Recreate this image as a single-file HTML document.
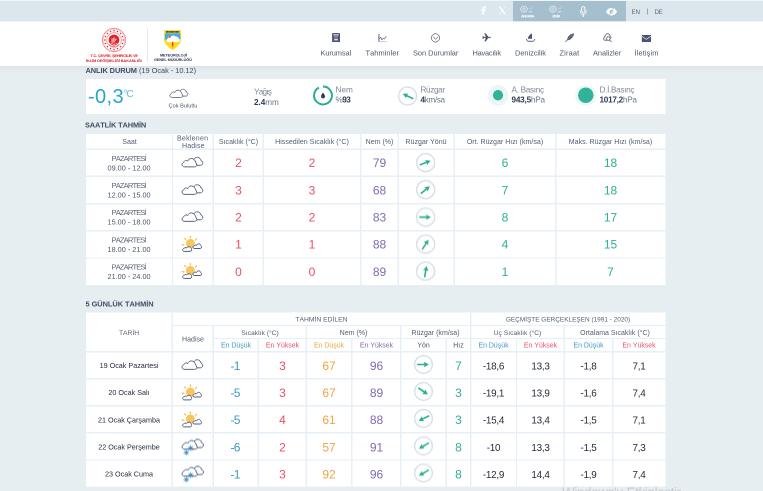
<!DOCTYPE html>
<html lang="tr"><head><meta charset="utf-8"><title>MGM</title>
<style>
html,body{margin:0;padding:0}
body{width:763px;height:491px;overflow:hidden;position:relative;background:#e7eef2;font-family:"Liberation Sans",sans-serif;color:#4c566c;font-kerning:none}
.ab{position:absolute}
.t{text-align:center;white-space:nowrap;line-height:1;will-change:transform}
.box{position:absolute;background:#fff}
.ln{position:absolute;background:#e7f0f7}
</style></head><body>
<div style="position:absolute;left:0;top:0;width:1526px;height:982px;transform:scale(.5);transform-origin:0 0">

<div class="ab" style="left:0;top:0;width:1526px;height:42.8px;background:#dbe6ed"></div>
<div class="ab" style="left:0;top:0;width:1526px;height:2px;background:#f1f5f8"></div>
<div class="ab" style="left:1026px;top:2px;width:226px;height:40.8px;background:#a6bfcf"></div>
<div class="ab" style="left:0;top:42.8px;width:1526px;height:89.2px;background:#fff"></div>
<div class="ab" style="left:0;top:132px;width:1526px;height:12px;background:linear-gradient(#dbe4ea,#e7eef2)"></div>
<div class="ab t" style="left:1263.06px;top:18px;font-size:12.4px;color:#5d677b;text-align:left;letter-spacing:-0.14px;">EN</div>
<div class="ab" style="left:1294px;top:17.2px;width:1.6px;height:12px;background:#9aa6b4"></div>
<div class="ab t" style="left:1308.86px;top:18px;font-size:12.4px;color:#5d677b;text-align:left;letter-spacing:-0.94px;">DE</div>
<div class="ab t" style="left:180.52px;top:108px;font-size:7.9px;color:#e0202b;text-align:left;letter-spacing:-0.46px;font-weight:bold;">T.C. ÇEVRE, ŞEHİRCİLİK VE</div>
<div class="ab t" style="left:172.32px;top:118px;font-size:7.9px;color:#e0202b;text-align:left;letter-spacing:-0.23px;font-weight:bold;">İKLİM DEĞİŞİKLİĞİ BAKANLIĞI</div>
<div class="ab t" style="left:319.94px;top:107px;font-size:7.6px;color:#2b3350;text-align:left;letter-spacing:-0.22px;font-weight:bold;">METEOROLOJİ</div>
<div class="ab t" style="left:307.94px;top:116px;font-size:7.6px;color:#2b3350;text-align:left;letter-spacing:-0.17px;font-weight:bold;">GENEL MÜDÜRLÜĞÜ</div>
<div class="ab t" style="left:641.32px;top:99px;font-size:14.8px;color:#4c566c;text-align:left;letter-spacing:-0.16px;">Kurumsal</div>
<div class="ab t" style="left:730.92px;top:99px;font-size:14.8px;color:#4c566c;text-align:left;letter-spacing:0.15px;">Tahminler</div>
<div class="ab t" style="left:825.52px;top:99px;font-size:14.8px;color:#4c566c;text-align:left;letter-spacing:-0.05px;">Son Durumlar</div>
<div class="ab t" style="left:945.12px;top:99px;font-size:14.8px;color:#4c566c;text-align:left;letter-spacing:-0.46px;">Havacılık</div>
<div class="ab t" style="left:1029.72px;top:99px;font-size:14.8px;color:#4c566c;text-align:left;letter-spacing:-0.06px;">Denizcilik</div>
<div class="ab t" style="left:1118.92px;top:99px;font-size:14.8px;color:#4c566c;text-align:left;letter-spacing:0.31px;">Ziraat</div>
<div class="ab t" style="left:1185.52px;top:99px;font-size:14.8px;color:#4c566c;text-align:left;letter-spacing:-0.05px;">Analizler</div>
<div class="ab t" style="left:1269.12px;top:99px;font-size:14.8px;color:#4c566c;text-align:left;letter-spacing:0.25px;">İletişim</div>
<div class="box" style="left:172px;top:157.6px;width:1158.6px;height:70.6px"></div>
<div class="ab t" style="left:170.52px;top:134px;font-size:14.8px;color:#3f4b63;text-align:left;letter-spacing:-0.16px;font-weight:bold;">ANLIK DURUM</div>
<div class="ab t" style="left:277.52px;top:134px;font-size:14.8px;color:#3f4b63;text-align:left;letter-spacing:-0.06px;">(19 Ocak - 10.12)</div>
<div class="ab t" style="left:176.4px;top:172px;font-size:40px;color:#27a6c9;text-align:left;letter-spacing:0.76px;">-0,3</div>
<div class="ab t" style="left:247.18px;top:177px;font-size:20.4px;color:#5fbfd8;text-align:left;letter-spacing:-2.44px;">°C</div>
<svg class="ab" style="left:337.6px;top:177.2px;width:40.32px;height:21.84px" viewBox="0 0 24 13"><g fill="#fff" stroke="#525c7a" stroke-width="0.98" stroke-linejoin="round" stroke-linecap="round"><path d="M13.4 2.6 C14.2 1.2 15.6 0.7 17 0.8 C19.2 1 20.3 2.6 20.6 4.2 C22 4.6 22.6 5.8 22.4 7 C22.2 8.3 21.2 9.1 20 9.1 L16.3 9.1 Z"/><path d="M3.6 10.7 C2 10.7 1.1 9.6 1.1 8.3 C1.1 7 2 6.2 3 5.9 C3.2 4.7 4.3 3.9 5.6 4.1 C6.2 4.2 6.6 4.5 6.9 4.8 C7.4 3 9 1.9 10.9 2 C13.3 2.2 14.6 4 15.2 6 L16.4 8.7 C16.2 10 15.3 10.7 14.2 10.7 Z"/></g></svg>
<div class="ab t" style="left:337.12px;top:206px;font-size:11.2px;color:#4c566c;text-align:left;letter-spacing:0.05px;">Çok Bulutlu</div>
<div class="ab t" style="left:508.22px;top:175px;font-size:16.4px;color:#7d8799;text-align:left;letter-spacing:-1.54px;">Yağış</div>
<div class="ab t" style="left:508.22px;top:196px;font-size:16.4px;text-align:left;letter-spacing:-0.14px;"><span style="color:#2f3a55;font-weight:bold;">2.4</span><span style="color:#6a7488;">mm</span></div>
<div class="ab t" style="left:671.42px;top:171px;font-size:16.4px;color:#7d8799;text-align:left;letter-spacing:0.07px;">Nem</div>
<div class="ab t" style="left:671.42px;top:191px;font-size:16.4px;text-align:left;letter-spacing:-1.13px;"><span style="color:#6a7488;">%</span><span style="color:#2f3a55;font-weight:bold;">93</span></div>
<div class="ab t" style="left:841.02px;top:171px;font-size:16.4px;color:#7d8799;text-align:left;letter-spacing:-0.74px;">Rüzgar</div>
<div class="ab t" style="left:841.02px;top:191px;font-size:16.4px;text-align:left;letter-spacing:-0.74px;"><span style="color:#2f3a55;font-weight:bold;">4</span><span style="color:#6a7488;">km/sa</span></div>
<div class="ab t" style="left:1023.42px;top:171px;font-size:16.4px;color:#7d8799;text-align:left;letter-spacing:-0.63px;">A. Basınç</div>
<div class="ab t" style="left:1023.42px;top:191px;font-size:16.4px;text-align:left;letter-spacing:-0.44px;"><span style="color:#2f3a55;font-weight:bold;">943,5</span><span style="color:#6a7488;">hPa</span></div>
<div class="ab t" style="left:1199.02px;top:171px;font-size:16.4px;color:#7d8799;text-align:left;letter-spacing:-0.63px;">D.İ.Basınç</div>
<div class="ab t" style="left:1199.02px;top:191px;font-size:16.4px;text-align:left;letter-spacing:-0.55px;"><span style="color:#2f3a55;font-weight:bold;">1017,2</span><span style="color:#6a7488;">hPa</span></div>
<svg class="ab" style="left:624px;top:169.2px;width:44px;height:44px" viewBox="0 0 22 22"><path d="M11.00 2.05A8.95 8.95 0 1 1 6.94 3.03" fill="none" stroke="#22ad92" stroke-width="1.9"/><path d="M11 7.9C12.2 9.8 13 10.9 13 12C13 13.2 12.1 14 11 14C9.9 14 9 13.2 9 12C9 10.9 9.8 9.8 11 7.9Z" fill="#2b3350"/><path d="M10.1 11.8C10.1 12.5 10.5 13 11 13.1" stroke="#9aa2b5" stroke-width="0.5" fill="none"/></svg>
<svg class="ab" style="left:793.6px;top:170.6px;width:42.4px;height:42.4px" viewBox="0 0 21.2 21.2"><circle cx="10.6" cy="10.6" r="9.049999999999999" fill="#fff" stroke="#d8e0e6" stroke-width="1.45"/><g transform="rotate(205 10.6 10.6)"><path d="M4.3 9.799999999999999L11.5 9.799999999999999L11.1 7.8999999999999995L15.899999999999999 10.6L11.1 13.3L11.5 11.4L4.3 11.4Z" fill="#2daf97"/></g></svg>
<div class="ab" style="left:975px;top:169.8px;width:42px;height:42px;border-radius:50%;background:#ecf7f5"></div><div class="ab" style="left:985.6px;top:180.4px;width:20.8px;height:20.8px;border-radius:50%;background:#33b29a"></div>
<div class="ab" style="left:1150.2px;top:169.8px;width:42px;height:42px;border-radius:50%;background:#ecf7f5"></div><div class="ab" style="left:1155.8px;top:175.4px;width:30.8px;height:30.8px;border-radius:50%;background:#33b29a"></div>
<div class="ab t" style="left:170.32px;top:243px;font-size:14.8px;color:#3f4b63;text-align:left;letter-spacing:-0.25px;font-weight:bold;">SAATLİK TAHMİN</div>
<div class="box" style="left:172px;top:267.8px;width:1158.6px;height:301.8px"></div>
<div class="ln" style="left:172px;top:297px;width:1158.6px;height:2.8px"></div>
<div class="ln" style="left:172px;top:351.4px;width:1158.6px;height:2.8px"></div>
<div class="ln" style="left:172px;top:405.8px;width:1158.6px;height:2.8px"></div>
<div class="ln" style="left:172px;top:460.2px;width:1158.6px;height:2.8px"></div>
<div class="ln" style="left:172px;top:514.6px;width:1158.6px;height:2.8px"></div>
<div class="ln" style="left:343.6px;top:267.8px;width:2.8px;height:301.8px"></div>
<div class="ln" style="left:425px;top:267.8px;width:2.8px;height:301.8px"></div>
<div class="ln" style="left:525.2px;top:267.8px;width:2.8px;height:301.8px"></div>
<div class="ln" style="left:719.8px;top:267.8px;width:2.8px;height:301.8px"></div>
<div class="ln" style="left:795.2px;top:267.8px;width:2.8px;height:301.8px"></div>
<div class="ln" style="left:906.8px;top:267.8px;width:2.8px;height:301.8px"></div>
<div class="ln" style="left:1110.2px;top:267.8px;width:2.8px;height:301.8px"></div>
<div class="ab t" style="left:58.5px;top:276px;width:400px;font-size:14.1px;color:#545e74;">Saat</div>
<div class="ab t" style="left:276.5px;top:276px;width:400px;font-size:14.1px;color:#545e74;">Sıcaklık (°C)</div>
<div class="ab t" style="left:423.9px;top:276px;width:400px;font-size:14.1px;color:#545e74;">Hissedilen Sıcaklık (°C)</div>
<div class="ab t" style="left:558.9px;top:276px;width:400px;font-size:14.1px;color:#545e74;">Nem (%)</div>
<div class="ab t" style="left:652.4px;top:276px;width:400px;font-size:14.1px;color:#545e74;">Rüzgar Yönü</div>
<div class="ab t" style="left:809.9px;top:276px;width:400px;font-size:14.1px;color:#545e74;">Ort. Rüzgar Hızı (km/sa)</div>
<div class="ab t" style="left:1021.1px;top:276px;width:400px;font-size:14.1px;color:#545e74;">Maks. Rüzgar Hızı (km/sa)</div>
<div class="ab t" style="left:354.36px;top:269px;font-size:14.1px;color:#545e74;text-align:left;letter-spacing:0.47px;">Beklenen</div>
<div class="ab t" style="left:363.56px;top:284px;font-size:14.1px;color:#545e74;text-align:left;letter-spacing:0.24px;">Hadise</div>
<div class="ab t" style="left:223.1px;top:309px;font-size:15px;color:#5b6579;text-align:left;letter-spacing:-1.62px;">PAZARTESİ</div>
<div class="ab t" style="left:214.52px;top:329px;font-size:14.6px;color:#4c566c;text-align:left;letter-spacing:0.01px;">09.00 - 12.00</div>
<svg class="ab" style="left:362px;top:313.2px;width:46.56px;height:25.22px" viewBox="0 0 24 13"><g fill="#fff" stroke="#525c7a" stroke-width="0.98" stroke-linejoin="round" stroke-linecap="round"><path d="M13.4 2.6 C14.2 1.2 15.6 0.7 17 0.8 C19.2 1 20.3 2.6 20.6 4.2 C22 4.6 22.6 5.8 22.4 7 C22.2 8.3 21.2 9.1 20 9.1 L16.3 9.1 Z"/><path d="M3.6 10.7 C2 10.7 1.1 9.6 1.1 8.3 C1.1 7 2 6.2 3 5.9 C3.2 4.7 4.3 3.9 5.6 4.1 C6.2 4.2 6.6 4.5 6.9 4.8 C7.4 3 9 1.9 10.9 2 C13.3 2.2 14.6 4 15.2 6 L16.4 8.7 C16.2 10 15.3 10.7 14.2 10.7 Z"/></g></svg>
<div class="ab t" style="left:276.5px;top:314px;width:400px;font-size:24px;color:#e8506a;">2</div>
<div class="ab t" style="left:423.9px;top:314px;width:400px;font-size:24px;color:#e8506a;">2</div>
<div class="ab t" style="left:558.9px;top:314px;width:400px;font-size:24px;color:#7e6bb0;">79</div>
<svg class="ab" style="left:830.3px;top:303.7px;width:42.6px;height:42.6px" viewBox="0 0 21.3 21.3"><circle cx="10.65" cy="10.65" r="9.1" fill="#fff" stroke="#d8e0e6" stroke-width="1.45"/><g transform="rotate(-21 10.65 10.65)"><path d="M4.3500000000000005 9.85L11.55 9.85L11.15 7.95L15.95 10.65L11.15 13.350000000000001L11.55 11.450000000000001L4.3500000000000005 11.450000000000001Z" fill="#2daf97"/></g></svg>
<div class="ab t" style="left:809.9px;top:314px;width:400px;font-size:24px;color:#2daf97;">6</div>
<div class="ab t" style="left:1021.1px;top:314px;width:400px;font-size:24px;color:#2daf97;">18</div>
<div class="ab t" style="left:223.1px;top:363px;font-size:15px;color:#5b6579;text-align:left;letter-spacing:-1.62px;">PAZARTESİ</div>
<div class="ab t" style="left:214.52px;top:383px;font-size:14.6px;color:#4c566c;text-align:left;letter-spacing:0.01px;">12.00 - 15.00</div>
<svg class="ab" style="left:362px;top:367.6px;width:46.56px;height:25.22px" viewBox="0 0 24 13"><g fill="#fff" stroke="#525c7a" stroke-width="0.98" stroke-linejoin="round" stroke-linecap="round"><path d="M13.4 2.6 C14.2 1.2 15.6 0.7 17 0.8 C19.2 1 20.3 2.6 20.6 4.2 C22 4.6 22.6 5.8 22.4 7 C22.2 8.3 21.2 9.1 20 9.1 L16.3 9.1 Z"/><path d="M3.6 10.7 C2 10.7 1.1 9.6 1.1 8.3 C1.1 7 2 6.2 3 5.9 C3.2 4.7 4.3 3.9 5.6 4.1 C6.2 4.2 6.6 4.5 6.9 4.8 C7.4 3 9 1.9 10.9 2 C13.3 2.2 14.6 4 15.2 6 L16.4 8.7 C16.2 10 15.3 10.7 14.2 10.7 Z"/></g></svg>
<div class="ab t" style="left:276.5px;top:369px;width:400px;font-size:24px;color:#e8506a;">3</div>
<div class="ab t" style="left:423.9px;top:369px;width:400px;font-size:24px;color:#e8506a;">3</div>
<div class="ab t" style="left:558.9px;top:369px;width:400px;font-size:24px;color:#7e6bb0;">68</div>
<svg class="ab" style="left:830.3px;top:358.1px;width:42.6px;height:42.6px" viewBox="0 0 21.3 21.3"><circle cx="10.65" cy="10.65" r="9.1" fill="#fff" stroke="#d8e0e6" stroke-width="1.45"/><g transform="rotate(-40 10.65 10.65)"><path d="M4.3500000000000005 9.85L11.55 9.85L11.15 7.95L15.95 10.65L11.15 13.350000000000001L11.55 11.450000000000001L4.3500000000000005 11.450000000000001Z" fill="#2daf97"/></g></svg>
<div class="ab t" style="left:809.9px;top:369px;width:400px;font-size:24px;color:#2daf97;">7</div>
<div class="ab t" style="left:1021.1px;top:369px;width:400px;font-size:24px;color:#2daf97;">18</div>
<div class="ab t" style="left:223.1px;top:417px;font-size:15px;color:#5b6579;text-align:left;letter-spacing:-1.62px;">PAZARTESİ</div>
<div class="ab t" style="left:214.52px;top:437px;font-size:14.6px;color:#4c566c;text-align:left;letter-spacing:0.01px;">15.00 - 18.00</div>
<svg class="ab" style="left:362px;top:422px;width:46.56px;height:25.22px" viewBox="0 0 24 13"><g fill="#fff" stroke="#525c7a" stroke-width="0.98" stroke-linejoin="round" stroke-linecap="round"><path d="M13.4 2.6 C14.2 1.2 15.6 0.7 17 0.8 C19.2 1 20.3 2.6 20.6 4.2 C22 4.6 22.6 5.8 22.4 7 C22.2 8.3 21.2 9.1 20 9.1 L16.3 9.1 Z"/><path d="M3.6 10.7 C2 10.7 1.1 9.6 1.1 8.3 C1.1 7 2 6.2 3 5.9 C3.2 4.7 4.3 3.9 5.6 4.1 C6.2 4.2 6.6 4.5 6.9 4.8 C7.4 3 9 1.9 10.9 2 C13.3 2.2 14.6 4 15.2 6 L16.4 8.7 C16.2 10 15.3 10.7 14.2 10.7 Z"/></g></svg>
<div class="ab t" style="left:276.5px;top:423px;width:400px;font-size:24px;color:#e8506a;">2</div>
<div class="ab t" style="left:423.9px;top:423px;width:400px;font-size:24px;color:#e8506a;">2</div>
<div class="ab t" style="left:558.9px;top:423px;width:400px;font-size:24px;color:#7e6bb0;">83</div>
<svg class="ab" style="left:830.3px;top:412.5px;width:42.6px;height:42.6px" viewBox="0 0 21.3 21.3"><circle cx="10.65" cy="10.65" r="9.1" fill="#fff" stroke="#d8e0e6" stroke-width="1.45"/><g transform="rotate(0 10.65 10.65)"><path d="M4.3500000000000005 9.85L11.55 9.85L11.15 7.95L15.95 10.65L11.15 13.350000000000001L11.55 11.450000000000001L4.3500000000000005 11.450000000000001Z" fill="#2daf97"/></g></svg>
<div class="ab t" style="left:809.9px;top:423px;width:400px;font-size:24px;color:#2daf97;">8</div>
<div class="ab t" style="left:1021.1px;top:423px;width:400px;font-size:24px;color:#2daf97;">17</div>
<div class="ab t" style="left:223.1px;top:472px;font-size:15px;color:#5b6579;text-align:left;letter-spacing:-1.62px;">PAZARTESİ</div>
<div class="ab t" style="left:214.52px;top:492px;font-size:14.6px;color:#4c566c;text-align:left;letter-spacing:0.01px;">18.00 - 21.00</div>
<svg class="ab" style="left:362px;top:471px;width:48px;height:38px" viewBox="0 0 24 19"><g stroke="#f8c65f" stroke-width="1.35" stroke-linecap="round"><path d="M9.4 0.9V2.5"/><path d="M3.5 3.0L4.8 4.1"/><path d="M15.4 3.3L14.5 4.5"/><path d="M1.2 9.2H2.9"/></g><circle cx="9.4" cy="7.9" r="4.45" fill="#f8c65f"/><g fill="#fff" stroke="#525c7a" stroke-width="1" stroke-linejoin="round"><path d="M13.2 13.0 C12.3 13.0 11.8 12.4 11.8 11.7 C11.8 10.9 12.5 10.4 13.2 10.4 C13.5 9.8 14.1 9.5 14.8 9.6 C15.1 9.6 15.4 9.7 15.6 9.9 C16.0 8.9 16.7 8.3 17.6 8.3 C18.8 8.3 19.7 9.2 19.9 10.3 C20.3 10.6 20.6 11.1 20.55 11.7 C20.5 12.5 19.9 13.0 19.2 13.0 Z"/><path d="M3.2 15.9 C2.2 15.9 1.6 15.1 1.6 14.3 C1.6 13.4 2.4 12.8 3.2 12.8 C3.5 12.2 4.2 11.9 4.9 12.0 C5.3 12.0 5.6 12.2 5.8 12.3 C6.3 11.6 7.1 11.2 8.0 11.2 C9.3 11.2 10.2 12.1 10.4 13.2 C10.6 13.6 10.7 14.0 10.6 14.5 C10.5 15.4 9.9 15.9 9.2 15.9 Z"/></g></svg>
<div class="ab t" style="left:276.5px;top:477px;width:400px;font-size:24px;color:#e8506a;">1</div>
<div class="ab t" style="left:423.9px;top:477px;width:400px;font-size:24px;color:#e8506a;">1</div>
<div class="ab t" style="left:558.9px;top:477px;width:400px;font-size:24px;color:#7e6bb0;">88</div>
<svg class="ab" style="left:830.3px;top:466.9px;width:42.6px;height:42.6px" viewBox="0 0 21.3 21.3"><circle cx="10.65" cy="10.65" r="9.1" fill="#fff" stroke="#d8e0e6" stroke-width="1.45"/><g transform="rotate(-57 10.65 10.65)"><path d="M4.3500000000000005 9.85L11.55 9.85L11.15 7.95L15.95 10.65L11.15 13.350000000000001L11.55 11.450000000000001L4.3500000000000005 11.450000000000001Z" fill="#2daf97"/></g></svg>
<div class="ab t" style="left:809.9px;top:477px;width:400px;font-size:24px;color:#2daf97;">4</div>
<div class="ab t" style="left:1021.1px;top:477px;width:400px;font-size:24px;color:#2daf97;">15</div>
<div class="ab t" style="left:223.1px;top:526px;font-size:15px;color:#5b6579;text-align:left;letter-spacing:-1.62px;">PAZARTESİ</div>
<div class="ab t" style="left:214.52px;top:546px;font-size:14.6px;color:#4c566c;text-align:left;letter-spacing:0.01px;">21.00 - 24.00</div>
<svg class="ab" style="left:362px;top:525.4px;width:48px;height:38px" viewBox="0 0 24 19"><g stroke="#f8c65f" stroke-width="1.35" stroke-linecap="round"><path d="M9.4 0.9V2.5"/><path d="M3.5 3.0L4.8 4.1"/><path d="M15.4 3.3L14.5 4.5"/><path d="M1.2 9.2H2.9"/></g><circle cx="9.4" cy="7.9" r="4.45" fill="#f8c65f"/><g fill="#fff" stroke="#525c7a" stroke-width="1" stroke-linejoin="round"><path d="M13.2 13.0 C12.3 13.0 11.8 12.4 11.8 11.7 C11.8 10.9 12.5 10.4 13.2 10.4 C13.5 9.8 14.1 9.5 14.8 9.6 C15.1 9.6 15.4 9.7 15.6 9.9 C16.0 8.9 16.7 8.3 17.6 8.3 C18.8 8.3 19.7 9.2 19.9 10.3 C20.3 10.6 20.6 11.1 20.55 11.7 C20.5 12.5 19.9 13.0 19.2 13.0 Z"/><path d="M3.2 15.9 C2.2 15.9 1.6 15.1 1.6 14.3 C1.6 13.4 2.4 12.8 3.2 12.8 C3.5 12.2 4.2 11.9 4.9 12.0 C5.3 12.0 5.6 12.2 5.8 12.3 C6.3 11.6 7.1 11.2 8.0 11.2 C9.3 11.2 10.2 12.1 10.4 13.2 C10.6 13.6 10.7 14.0 10.6 14.5 C10.5 15.4 9.9 15.9 9.2 15.9 Z"/></g></svg>
<div class="ab t" style="left:276.5px;top:532px;width:400px;font-size:24px;color:#e8506a;">0</div>
<div class="ab t" style="left:423.9px;top:532px;width:400px;font-size:24px;color:#e8506a;">0</div>
<div class="ab t" style="left:558.9px;top:532px;width:400px;font-size:24px;color:#7e6bb0;">89</div>
<svg class="ab" style="left:830.3px;top:521.3px;width:42.6px;height:42.6px" viewBox="0 0 21.3 21.3"><circle cx="10.65" cy="10.65" r="9.1" fill="#fff" stroke="#d8e0e6" stroke-width="1.45"/><g transform="rotate(-80 10.65 10.65)"><path d="M4.3500000000000005 9.85L11.55 9.85L11.15 7.95L15.95 10.65L11.15 13.350000000000001L11.55 11.450000000000001L4.3500000000000005 11.450000000000001Z" fill="#2daf97"/></g></svg>
<div class="ab t" style="left:809.9px;top:532px;width:400px;font-size:24px;color:#2daf97;">1</div>
<div class="ab t" style="left:1021.1px;top:532px;width:400px;font-size:24px;color:#2daf97;">7</div>
<div class="ab t" style="left:170.72px;top:601px;font-size:14.8px;color:#3f4b63;text-align:left;letter-spacing:-0.08px;font-weight:bold;">5 GÜNLÜK TAHMİN</div>
<div class="box" style="left:172px;top:625.2px;width:1158.6px;height:347.6px"></div>
<div class="ln" style="left:344.8px;top:649.6px;width:985.8px;height:2.8px"></div>
<div class="ln" style="left:426.4px;top:675.6px;width:904.2px;height:2.8px"></div>
<div class="ln" style="left:172px;top:701.8px;width:1158.6px;height:2.8px"></div>
<div class="ln" style="left:172px;top:756px;width:1158.6px;height:2.8px"></div>
<div class="ln" style="left:172px;top:810.2px;width:1158.6px;height:2.8px"></div>
<div class="ln" style="left:172px;top:864.4px;width:1158.6px;height:2.8px"></div>
<div class="ln" style="left:172px;top:918.6px;width:1158.6px;height:2.8px"></div>
<div class="ln" style="left:343.4px;top:625.2px;width:2.8px;height:347.6px"></div>
<div class="ln" style="left:425px;top:651px;width:2.8px;height:321.8px"></div>
<div class="ln" style="left:611.4px;top:651px;width:2.8px;height:321.8px"></div>
<div class="ln" style="left:799.8px;top:651px;width:2.8px;height:321.8px"></div>
<div class="ln" style="left:1127.4px;top:651px;width:2.8px;height:321.8px"></div>
<div class="ln" style="left:939.8px;top:625.2px;width:2.8px;height:347.6px"></div>
<div class="ln" style="left:515.2px;top:677px;width:2.8px;height:295.8px"></div>
<div class="ln" style="left:702.4px;top:677px;width:2.8px;height:295.8px"></div>
<div class="ln" style="left:891.4px;top:677px;width:2.8px;height:295.8px"></div>
<div class="ln" style="left:1031.6px;top:677px;width:2.8px;height:295.8px"></div>
<div class="ln" style="left:1224.4px;top:677px;width:2.8px;height:295.8px"></div>
<div class="ab t" style="left:58.4px;top:659px;width:400px;font-size:13.4px;color:#545e74;">TARİH</div>
<div class="ab t" style="left:185.6px;top:671px;width:400px;font-size:14.1px;color:#545e74;">Hadise</div>
<div class="ab t" style="left:443px;top:632px;width:400px;font-size:13.5px;color:#545e74;">TAHMİN EDİLEN</div>
<div class="ab t" style="left:935.9px;top:633px;width:400px;font-size:12.9px;color:#545e74;">GEÇMİŞTE GERÇEKLEŞEN (1991 - 2020)</div>
<div class="ab t" style="left:319.6px;top:659px;width:400px;font-size:13.5px;color:#545e74;">Sıcaklık (°C)</div>
<div class="ab t" style="left:507px;top:658px;width:400px;font-size:14.1px;color:#545e74;">Nem (%)</div>
<div class="ab t" style="left:671.2px;top:658px;width:400px;font-size:14.1px;color:#545e74;">Rüzgar (km/sa)</div>
<div class="ab t" style="left:835px;top:659px;width:400px;font-size:13.5px;color:#545e74;">Uç Sıcaklık (°C)</div>
<div class="ab t" style="left:1029.7px;top:658px;width:400px;font-size:14px;color:#545e74;">Ortalama Sıcaklık (°C)</div>
<div class="ab t" style="left:271.5px;top:684px;width:400px;font-size:13.9px;color:#3c9ac6;">En Düşük</div>
<div class="ab t" style="left:364.7px;top:684px;width:400px;font-size:13.9px;color:#e8506a;">En Yüksek</div>
<div class="ab t" style="left:458.3px;top:684px;width:400px;font-size:13.9px;color:#f0a341;">En Düşük</div>
<div class="ab t" style="left:552.5px;top:684px;width:400px;font-size:13.9px;color:#7e6bb0;">En Yüksek</div>
<div class="ab t" style="left:647px;top:684px;width:400px;font-size:13.9px;color:#4c566c;">Yön</div>
<div class="ab t" style="left:717px;top:684px;width:400px;font-size:13.9px;color:#4c566c;">Hız</div>
<div class="ab t" style="left:787.1px;top:684px;width:400px;font-size:13.9px;color:#3c9ac6;">En Düşük</div>
<div class="ab t" style="left:880.9px;top:684px;width:400px;font-size:13.9px;color:#e8506a;">En Yüksek</div>
<div class="ab t" style="left:977.3px;top:684px;width:400px;font-size:13.9px;color:#3c9ac6;">En Düşük</div>
<div class="ab t" style="left:1078.2px;top:684px;width:400px;font-size:13.9px;color:#e8506a;">En Yüksek</div>
<div class="ab t" style="left:57.6px;top:724px;width:400px;font-size:14.4px;color:#262b3a;">19 Ocak Pazartesi</div>
<svg class="ab" style="left:361.8px;top:718.4px;width:46.56px;height:25.22px" viewBox="0 0 24 13"><g fill="#fff" stroke="#525c7a" stroke-width="0.98" stroke-linejoin="round" stroke-linecap="round"><path d="M13.4 2.6 C14.2 1.2 15.6 0.7 17 0.8 C19.2 1 20.3 2.6 20.6 4.2 C22 4.6 22.6 5.8 22.4 7 C22.2 8.3 21.2 9.1 20 9.1 L16.3 9.1 Z"/><path d="M3.6 10.7 C2 10.7 1.1 9.6 1.1 8.3 C1.1 7 2 6.2 3 5.9 C3.2 4.7 4.3 3.9 5.6 4.1 C6.2 4.2 6.6 4.5 6.9 4.8 C7.4 3 9 1.9 10.9 2 C13.3 2.2 14.6 4 15.2 6 L16.4 8.7 C16.2 10 15.3 10.7 14.2 10.7 Z"/></g></svg>
<div class="ab t" style="left:270.5px;top:720px;width:400px;font-size:24px;color:#3c9ac6;"><span style="margin-right:-1.6px">-</span>1</div>
<div class="ab t" style="left:364.7px;top:720px;width:400px;font-size:24px;color:#e8506a;">3</div>
<div class="ab t" style="left:458.3px;top:720px;width:400px;font-size:24px;color:#f0a341;">67</div>
<div class="ab t" style="left:552.5px;top:720px;width:400px;font-size:24px;color:#7e6bb0;">96</div>
<svg class="ab" style="left:825.6px;top:708px;width:42px;height:42px" viewBox="0 0 21.0 21.0"><circle cx="10.5" cy="10.5" r="8.95" fill="#fff" stroke="#d8e0e6" stroke-width="1.45"/><g transform="rotate(0 10.5 10.5)"><path d="M4.2 9.7L11.4 9.7L11.0 7.8L15.8 10.5L11.0 13.2L11.4 11.3L4.2 11.3Z" fill="#2daf97"/></g></svg>
<div class="ab t" style="left:717px;top:720px;width:400px;font-size:24px;color:#2daf97;">7</div>
<div class="ab t" style="left:787.1px;top:723px;width:400px;font-size:19.8px;color:#262b3a;letter-spacing:-0.56px;">-18,6</div>
<div class="ab t" style="left:880.9px;top:723px;width:400px;font-size:19.8px;color:#262b3a;letter-spacing:-0.56px;">13,3</div>
<div class="ab t" style="left:977.3px;top:723px;width:400px;font-size:19.8px;color:#262b3a;letter-spacing:-0.56px;">-1,8</div>
<div class="ab t" style="left:1078.2px;top:723px;width:400px;font-size:19.8px;color:#262b3a;letter-spacing:-0.56px;">7,1</div>
<div class="ab t" style="left:57.6px;top:778px;width:400px;font-size:14.4px;color:#262b3a;">20 Ocak Salı</div>
<svg class="ab" style="left:362px;top:768px;width:48px;height:38px" viewBox="0 0 24 19"><g stroke="#f8c65f" stroke-width="1.35" stroke-linecap="round"><path d="M9.4 0.9V2.5"/><path d="M3.5 3.0L4.8 4.1"/><path d="M15.4 3.3L14.5 4.5"/><path d="M1.2 9.2H2.9"/></g><circle cx="9.4" cy="7.9" r="4.45" fill="#f8c65f"/><g fill="#fff" stroke="#525c7a" stroke-width="1" stroke-linejoin="round"><path d="M13.2 13.0 C12.3 13.0 11.8 12.4 11.8 11.7 C11.8 10.9 12.5 10.4 13.2 10.4 C13.5 9.8 14.1 9.5 14.8 9.6 C15.1 9.6 15.4 9.7 15.6 9.9 C16.0 8.9 16.7 8.3 17.6 8.3 C18.8 8.3 19.7 9.2 19.9 10.3 C20.3 10.6 20.6 11.1 20.55 11.7 C20.5 12.5 19.9 13.0 19.2 13.0 Z"/><path d="M3.2 15.9 C2.2 15.9 1.6 15.1 1.6 14.3 C1.6 13.4 2.4 12.8 3.2 12.8 C3.5 12.2 4.2 11.9 4.9 12.0 C5.3 12.0 5.6 12.2 5.8 12.3 C6.3 11.6 7.1 11.2 8.0 11.2 C9.3 11.2 10.2 12.1 10.4 13.2 C10.6 13.6 10.7 14.0 10.6 14.5 C10.5 15.4 9.9 15.9 9.2 15.9 Z"/></g></svg>
<div class="ab t" style="left:270.5px;top:774px;width:400px;font-size:24px;color:#3c9ac6;"><span style="margin-right:-1.6px">-</span>5</div>
<div class="ab t" style="left:364.7px;top:774px;width:400px;font-size:24px;color:#e8506a;">3</div>
<div class="ab t" style="left:458.3px;top:774px;width:400px;font-size:24px;color:#f0a341;">67</div>
<div class="ab t" style="left:552.5px;top:774px;width:400px;font-size:24px;color:#7e6bb0;">89</div>
<svg class="ab" style="left:825.6px;top:762.2px;width:42px;height:42px" viewBox="0 0 21.0 21.0"><circle cx="10.5" cy="10.5" r="8.95" fill="#fff" stroke="#d8e0e6" stroke-width="1.45"/><g transform="rotate(35 10.5 10.5)"><path d="M4.2 9.7L11.4 9.7L11.0 7.8L15.8 10.5L11.0 13.2L11.4 11.3L4.2 11.3Z" fill="#2daf97"/></g></svg>
<div class="ab t" style="left:717px;top:774px;width:400px;font-size:24px;color:#2daf97;">3</div>
<div class="ab t" style="left:787.1px;top:777px;width:400px;font-size:19.8px;color:#262b3a;letter-spacing:-0.56px;">-19,1</div>
<div class="ab t" style="left:880.9px;top:777px;width:400px;font-size:19.8px;color:#262b3a;letter-spacing:-0.56px;">13,9</div>
<div class="ab t" style="left:977.3px;top:777px;width:400px;font-size:19.8px;color:#262b3a;letter-spacing:-0.56px;">-1,6</div>
<div class="ab t" style="left:1078.2px;top:777px;width:400px;font-size:19.8px;color:#262b3a;letter-spacing:-0.56px;">7,4</div>
<div class="ab t" style="left:57.6px;top:833px;width:400px;font-size:14.4px;color:#262b3a;">21 Ocak Çarşamba</div>
<svg class="ab" style="left:362px;top:822.2px;width:48px;height:38px" viewBox="0 0 24 19"><g stroke="#f8c65f" stroke-width="1.35" stroke-linecap="round"><path d="M9.4 0.9V2.5"/><path d="M3.5 3.0L4.8 4.1"/><path d="M15.4 3.3L14.5 4.5"/><path d="M1.2 9.2H2.9"/></g><circle cx="9.4" cy="7.9" r="4.45" fill="#f8c65f"/><g fill="#fff" stroke="#525c7a" stroke-width="1" stroke-linejoin="round"><path d="M13.2 13.0 C12.3 13.0 11.8 12.4 11.8 11.7 C11.8 10.9 12.5 10.4 13.2 10.4 C13.5 9.8 14.1 9.5 14.8 9.6 C15.1 9.6 15.4 9.7 15.6 9.9 C16.0 8.9 16.7 8.3 17.6 8.3 C18.8 8.3 19.7 9.2 19.9 10.3 C20.3 10.6 20.6 11.1 20.55 11.7 C20.5 12.5 19.9 13.0 19.2 13.0 Z"/><path d="M3.2 15.9 C2.2 15.9 1.6 15.1 1.6 14.3 C1.6 13.4 2.4 12.8 3.2 12.8 C3.5 12.2 4.2 11.9 4.9 12.0 C5.3 12.0 5.6 12.2 5.8 12.3 C6.3 11.6 7.1 11.2 8.0 11.2 C9.3 11.2 10.2 12.1 10.4 13.2 C10.6 13.6 10.7 14.0 10.6 14.5 C10.5 15.4 9.9 15.9 9.2 15.9 Z"/></g></svg>
<div class="ab t" style="left:270.5px;top:828px;width:400px;font-size:24px;color:#3c9ac6;"><span style="margin-right:-1.6px">-</span>5</div>
<div class="ab t" style="left:364.7px;top:828px;width:400px;font-size:24px;color:#e8506a;">4</div>
<div class="ab t" style="left:458.3px;top:828px;width:400px;font-size:24px;color:#f0a341;">61</div>
<div class="ab t" style="left:552.5px;top:828px;width:400px;font-size:24px;color:#7e6bb0;">88</div>
<svg class="ab" style="left:825.6px;top:816.4px;width:42px;height:42px" viewBox="0 0 21.0 21.0"><circle cx="10.5" cy="10.5" r="8.95" fill="#fff" stroke="#d8e0e6" stroke-width="1.45"/><g transform="rotate(155 10.5 10.5)"><path d="M4.2 9.7L11.4 9.7L11.0 7.8L15.8 10.5L11.0 13.2L11.4 11.3L4.2 11.3Z" fill="#2daf97"/></g></svg>
<div class="ab t" style="left:717px;top:828px;width:400px;font-size:24px;color:#2daf97;">3</div>
<div class="ab t" style="left:787.1px;top:831px;width:400px;font-size:19.8px;color:#262b3a;letter-spacing:-0.56px;">-15,4</div>
<div class="ab t" style="left:880.9px;top:831px;width:400px;font-size:19.8px;color:#262b3a;letter-spacing:-0.56px;">13,4</div>
<div class="ab t" style="left:977.3px;top:831px;width:400px;font-size:19.8px;color:#262b3a;letter-spacing:-0.56px;">-1,5</div>
<div class="ab t" style="left:1078.2px;top:831px;width:400px;font-size:19.8px;color:#262b3a;letter-spacing:-0.56px;">7,1</div>
<div class="ab t" style="left:57.6px;top:887px;width:400px;font-size:14.4px;color:#262b3a;">22 Ocak Perşembe</div>
<svg class="ab" style="left:361.8px;top:877px;width:48px;height:40px" viewBox="0 0 24 20"><g fill="#fff" stroke="#525c7a" stroke-width="0.98" stroke-linejoin="round" stroke-linecap="round"><path d="M13.4 2.6 C14.2 1.2 15.6 0.7 17 0.8 C19.2 1 20.3 2.6 20.6 4.2 C22 4.6 22.6 5.8 22.4 7 C22.2 8.3 21.2 9.1 20 9.1 L16.3 9.1 Z"/><path d="M3.6 10.7 C2 10.7 1.1 9.6 1.1 8.3 C1.1 7 2 6.2 3 5.9 C3.2 4.7 4.3 3.9 5.6 4.1 C6.2 4.2 6.6 4.5 6.9 4.8 C7.4 3 9 1.9 10.9 2 C13.3 2.2 14.6 4 15.2 6 L16.4 8.7 C16.2 10 15.3 10.7 14.2 10.7 Z"/></g><path d="M6.80 9.60L12.60 9.60M7.65 7.55L11.75 11.65M9.70 6.70L9.70 12.50M11.75 7.55L7.65 11.65" stroke="#3b8bcf" stroke-width="0.75" fill="none"/><circle cx="9.7" cy="9.6" r="1.25" fill="#3b8bcf"/><path d="M2.40 14.10L8.20 14.10M3.25 12.05L7.35 16.15M5.30 11.20L5.30 17.00M7.35 12.05L3.25 16.15" stroke="#3b8bcf" stroke-width="0.75" fill="none"/><circle cx="5.3" cy="14.1" r="1.25" fill="#3b8bcf"/></svg>
<div class="ab t" style="left:270.5px;top:883px;width:400px;font-size:24px;color:#3c9ac6;"><span style="margin-right:-1.6px">-</span>6</div>
<div class="ab t" style="left:364.7px;top:883px;width:400px;font-size:24px;color:#e8506a;">2</div>
<div class="ab t" style="left:458.3px;top:883px;width:400px;font-size:24px;color:#f0a341;">57</div>
<div class="ab t" style="left:552.5px;top:883px;width:400px;font-size:24px;color:#7e6bb0;">91</div>
<svg class="ab" style="left:825.6px;top:870.6px;width:42px;height:42px" viewBox="0 0 21.0 21.0"><circle cx="10.5" cy="10.5" r="8.95" fill="#fff" stroke="#d8e0e6" stroke-width="1.45"/><g transform="rotate(150 10.5 10.5)"><path d="M4.2 9.7L11.4 9.7L11.0 7.8L15.8 10.5L11.0 13.2L11.4 11.3L4.2 11.3Z" fill="#2daf97"/></g></svg>
<div class="ab t" style="left:717px;top:883px;width:400px;font-size:24px;color:#2daf97;">8</div>
<div class="ab t" style="left:787.1px;top:886px;width:400px;font-size:19.8px;color:#262b3a;letter-spacing:-0.56px;">-10</div>
<div class="ab t" style="left:880.9px;top:886px;width:400px;font-size:19.8px;color:#262b3a;letter-spacing:-0.56px;">13,3</div>
<div class="ab t" style="left:977.3px;top:886px;width:400px;font-size:19.8px;color:#262b3a;letter-spacing:-0.56px;">-1,5</div>
<div class="ab t" style="left:1078.2px;top:886px;width:400px;font-size:19.8px;color:#262b3a;letter-spacing:-0.56px;">7,3</div>
<div class="ab t" style="left:57.6px;top:941px;width:400px;font-size:14.4px;color:#262b3a;">23 Ocak Cuma</div>
<svg class="ab" style="left:361.8px;top:931.2px;width:48px;height:40px" viewBox="0 0 24 20"><g fill="#fff" stroke="#525c7a" stroke-width="0.98" stroke-linejoin="round" stroke-linecap="round"><path d="M13.4 2.6 C14.2 1.2 15.6 0.7 17 0.8 C19.2 1 20.3 2.6 20.6 4.2 C22 4.6 22.6 5.8 22.4 7 C22.2 8.3 21.2 9.1 20 9.1 L16.3 9.1 Z"/><path d="M3.6 10.7 C2 10.7 1.1 9.6 1.1 8.3 C1.1 7 2 6.2 3 5.9 C3.2 4.7 4.3 3.9 5.6 4.1 C6.2 4.2 6.6 4.5 6.9 4.8 C7.4 3 9 1.9 10.9 2 C13.3 2.2 14.6 4 15.2 6 L16.4 8.7 C16.2 10 15.3 10.7 14.2 10.7 Z"/></g><path d="M6.80 9.60L12.60 9.60M7.65 7.55L11.75 11.65M9.70 6.70L9.70 12.50M11.75 7.55L7.65 11.65" stroke="#3b8bcf" stroke-width="0.75" fill="none"/><circle cx="9.7" cy="9.6" r="1.25" fill="#3b8bcf"/><path d="M2.40 14.10L8.20 14.10M3.25 12.05L7.35 16.15M5.30 11.20L5.30 17.00M7.35 12.05L3.25 16.15" stroke="#3b8bcf" stroke-width="0.75" fill="none"/><circle cx="5.3" cy="14.1" r="1.25" fill="#3b8bcf"/></svg>
<div class="ab t" style="left:270.5px;top:937px;width:400px;font-size:24px;color:#3c9ac6;"><span style="margin-right:-1.6px">-</span>1</div>
<div class="ab t" style="left:364.7px;top:937px;width:400px;font-size:24px;color:#e8506a;">3</div>
<div class="ab t" style="left:458.3px;top:937px;width:400px;font-size:24px;color:#f0a341;">92</div>
<div class="ab t" style="left:552.5px;top:937px;width:400px;font-size:24px;color:#7e6bb0;">96</div>
<svg class="ab" style="left:825.6px;top:924.8px;width:42px;height:42px" viewBox="0 0 21.0 21.0"><circle cx="10.5" cy="10.5" r="8.95" fill="#fff" stroke="#d8e0e6" stroke-width="1.45"/><g transform="rotate(150 10.5 10.5)"><path d="M4.2 9.7L11.4 9.7L11.0 7.8L15.8 10.5L11.0 13.2L11.4 11.3L4.2 11.3Z" fill="#2daf97"/></g></svg>
<div class="ab t" style="left:717px;top:937px;width:400px;font-size:24px;color:#2daf97;">8</div>
<div class="ab t" style="left:787.1px;top:940px;width:400px;font-size:19.8px;color:#262b3a;letter-spacing:-0.56px;">-12,9</div>
<div class="ab t" style="left:880.9px;top:940px;width:400px;font-size:19.8px;color:#262b3a;letter-spacing:-0.56px;">14,4</div>
<div class="ab t" style="left:977.3px;top:940px;width:400px;font-size:19.8px;color:#262b3a;letter-spacing:-0.56px;">-1,9</div>
<div class="ab t" style="left:1078.2px;top:940px;width:400px;font-size:19.8px;color:#262b3a;letter-spacing:-0.56px;">7,4</div>
<div class="ab t" style="left:1124.38px;top:972px;font-size:27px;color:#c5cbd0;text-align:left;letter-spacing:-0.8px;">Windows'u Etkinleştir</div>
<svg class="ab" style="left:200px;top:52.2px;width:56px;height:56px" viewBox="0 0 28 28"><circle cx="14" cy="14" r="11.7" fill="#fff" stroke="#e0202b" stroke-width="0.55"/>
<circle cx="14" cy="14" r="10.6" fill="none" stroke="#e0202b" stroke-width="0.3" stroke-dasharray="0.6 0.5"/>
<circle cx="14.00" cy="4.80" r="0.75" fill="#e0202b"/><circle cx="17.52" cy="5.50" r="0.75" fill="#e0202b"/><circle cx="20.51" cy="7.49" r="0.75" fill="#e0202b"/><circle cx="22.50" cy="10.48" r="0.75" fill="#e0202b"/><circle cx="23.20" cy="14.00" r="0.75" fill="#e0202b"/><circle cx="22.50" cy="17.52" r="0.75" fill="#e0202b"/><circle cx="20.51" cy="20.51" r="0.75" fill="#e0202b"/><circle cx="17.52" cy="22.50" r="0.75" fill="#e0202b"/><circle cx="14.00" cy="23.20" r="0.75" fill="#e0202b"/><circle cx="10.48" cy="22.50" r="0.75" fill="#e0202b"/><circle cx="7.49" cy="20.51" r="0.75" fill="#e0202b"/><circle cx="5.50" cy="17.52" r="0.75" fill="#e0202b"/><circle cx="4.80" cy="14.00" r="0.75" fill="#e0202b"/><circle cx="5.50" cy="10.48" r="0.75" fill="#e0202b"/><circle cx="7.49" cy="7.49" r="0.75" fill="#e0202b"/><circle cx="10.48" cy="5.50" r="0.75" fill="#e0202b"/>
<circle cx="14" cy="14" r="7.4" fill="none" stroke="#e0202b" stroke-width="0.45"/>
<circle cx="14" cy="14" r="5.4" fill="#e0202b"/>
<path d="M11.6 12.6h1v4.2h-1zM13.4 11.6h1.1v5.2h-1.1zM15.2 12.8h1.6l-1.6 2.8z" fill="#fff" opacity="0.9"/>
<path d="M10.6 17.2c2 1.5 4.8 1.5 6.8 0" stroke="#fff" stroke-width="0.6" fill="none"/>
<path d="M9.3 18.6c2.7 2.3 6.7 2.3 9.4 0" stroke="#e0202b" stroke-width="0.6" fill="none"/></svg>
<div class="ab" style="left:294px;top:57px;width:2px;height:66px;background:#e3e6ea"></div>
<svg class="ab" style="left:328.2px;top:60.4px;width:34.8px;height:40.4px" viewBox="0 0 17.4 20.2"><defs><clipPath id="shc"><path d="M0.4 0.3H16.8V9.5C16.8 13.5 12.5 17.6 8.6 19.8C4.7 17.6 0.4 13.5 0.4 9.5Z"/></clipPath></defs>
<g clip-path="url(#shc)"><rect width="18" height="21" fill="#ffd91c"/><rect x="0" y="3.2" width="18" height="6.4" fill="#45abe2"/>
<rect x="0" y="0" width="18" height="3.2" fill="#ffe23a"/><path d="M1.9 1.8H15.4" stroke="#34384f" stroke-width="1.8" stroke-dasharray="0.95 0.3"/>
<path d="M3.6 12.1c-1.5-0.3-1.7-2.4-0.2-3c-0.1-1.5 1.6-2.3 2.8-1.6c0.9-2 3.7-2.6 5.3-0.9c1.7-0.6 3.2 0.6 3 2c1.7 0.3 1.9 2.7 0.1 3.3c-1.5 0.5-3.300-0.1-5.500 0.200c-2.200 0.300-4 0.300-5.500 0z" fill="#fff"/>
<circle cx="5.6" cy="6.9" r="0.95" fill="#e8413a"/><circle cx="4.9" cy="6.4" r="0.5" fill="#ffd91c"/>
<path d="M8.2 11.7l1.2 0.100l-0.500 2.500l0.800 0l-1.100 4.300l-0.100-3.300l-0.800 0z" fill="#e8302a"/></g>
<path d="M0.4 0.3H16.8V9.5C16.8 13.5 12.5 17.6 8.6 19.8C4.7 17.6 0.4 13.5 0.4 9.5Z" fill="none" stroke="#ffe23a" stroke-width="0.9"/></svg>
<svg class="ab" style="left:664px;top:66.2px;width:16.4px;height:18.6px" viewBox="0 0 8.2 9.3"><rect x="0.1" y="0.1" width="7.9" height="9" rx="0.7" fill="#4a5472"/><rect x="1.3" y="0.9" width="5.5" height="1.7" fill="#b4bac7"/><rect x="1.9" y="3.6" width="4.1" height="0.6" fill="#fff" opacity="0.85"/><rect x="1.9" y="4.9" width="4.1" height="0.5" fill="#fff" opacity="0.55"/><rect x="2.2" y="6.1" width="3.7" height="1.3" fill="#fff" opacity="0.9"/></svg>
<svg class="ab" style="left:756px;top:67.2px;width:18.8px;height:18px" viewBox="0 0 9.4 9"><path d="M0.9 0.4V8.2" stroke="#4a5472" stroke-width="0.9" fill="none"/><path d="M0.9 8.2H8.8" stroke="#4a5472" stroke-width="0.6" opacity="0.55" fill="none"/><path d="M1.2 5.6L2.6 3.6L4 6.4L5.4 4.6L6.4 5.4L8.2 2.8" stroke="#4a5472" stroke-width="0.8" fill="none" stroke-linejoin="round"/></svg>
<svg class="ab" style="left:861.2px;top:65.8px;width:20px;height:20px" viewBox="0 0 10 10"><circle cx="5" cy="4.9" r="4.15" fill="none" stroke="#4a5472" stroke-width="0.75"/><path d="M2.8 3.9L5.1 6.1L7.5 3.9" fill="none" stroke="#4a5472" stroke-width="0.75" stroke-linecap="round" stroke-linejoin="round"/></svg>
<svg class="ab" style="left:964.4px;top:66.4px;width:19.2px;height:17.2px" viewBox="0 0 9.6 8.6"><path d="M0.3 3.6L1.4 3.5L2.2 4L4 4L2.6 0.4L3.7 0.4L6.3 4L8.3 4C9.1 4 9.3 4.6 8.3 4.7L6.3 4.7L3.7 8.2L2.6 8.2L4 4.7L2.2 4.7L1.4 5.4L0.5 5.4L1 4.35Z" fill="#4a5472" stroke="#4a5472" stroke-width="0.3" stroke-linejoin="round"/></svg>
<svg class="ab" style="left:1052px;top:66.4px;width:19.2px;height:18.4px" viewBox="0 0 9.6 9.2"><path d="M5.9 0.3L6.1 5.7L1.7 5.7C2.3 3.4 3.9 1.2 5.9 0.3Z" fill="#4a5472"/><path d="M0.5 6.4C0.7 7.6 1.3 8.3 2.2 8.3L6.9 8.3C7.8 8.3 8.5 7.6 8.8 6.4" fill="none" stroke="#4a5472" stroke-width="0.9" stroke-linecap="round"/></svg>
<svg class="ab" style="left:1130px;top:66.2px;width:19.2px;height:18.8px" viewBox="0 0 9.6 9.4"><path d="M0.5 8.9L3.6 5.4" stroke="#4a5472" stroke-width="0.85" stroke-linecap="round"/><path d="M2.3 7.2C1.9 4.4 4.4 1 9 0.3C8.9 1.7 8.3 2.2 8.7 2.5C8.1 3.6 7.3 3.8 7.6 4.3C6.8 5.3 6 5.3 6.2 5.8C5.2 6.9 3.8 7.5 2.3 7.2Z" fill="#4a5472"/><path d="M2.9 6.6L7.7 1.6" stroke="#fff" stroke-width="0.4" opacity="0.8"/></svg>
<svg class="ab" style="left:1205.8px;top:66.2px;width:19.2px;height:19.2px" viewBox="0 0 9.6 9.6"><path d="M3.4 7.3L2.3 7.3C1.1 7.3 0.5 6.4 0.6 5.4C0.7 4.6 1.2 4.1 1.9 3.9C2 2 3.1 0.6 4.5 0.6C5.9 0.6 6.9 1.7 7.2 3.2C7.9 3.6 8.1 4.4 7.9 5" fill="none" stroke="#4a5472" stroke-width="0.95" stroke-linecap="round" stroke-linejoin="round"/><circle cx="5.3" cy="5.6" r="1.9" fill="#fff" stroke="#4a5472" stroke-width="0.85"/><path d="M6.8 7.2L8.5 8.9" stroke="#4a5472" stroke-width="0.95" stroke-linecap="round"/></svg>
<svg class="ab" style="left:1283.2px;top:69.6px;width:19.6px;height:14.4px" viewBox="0 0 9.8 7.2"><rect x="0.1" y="0.1" width="9.5" height="6.9" rx="0.7" fill="#4a5472"/><path d="M0.4 1.3L4.85 4.3L9.3 1.3" fill="none" stroke="#fff" stroke-width="0.75"/></svg>
<svg class="ab" style="left:960.8px;top:12px;width:12px;height:18px" viewBox="0 0 6 9"><path d="M3.7 8.8V4.9H5.1L5.3 3.3H3.7V2.4C3.7 1.9 3.9 1.7 4.4 1.7H5.4V0.3C5.1 0.25 4.6 0.2 4.1 0.2C2.8 0.2 2 1 2 2.3V3.3H0.6V4.9H2V8.8Z" fill="#fff"/></svg>
<svg class="ab" style="left:996px;top:12.2px;width:17.2px;height:17.6px" viewBox="0 0 8.6 8.8"><path d="M0.4 0.3H2.4L8.2 8.5H6.2Z" fill="#fff" opacity="0.85"/><path d="M7.7 0.3L4.7 3.9M3.8 4.9L0.7 8.5" stroke="#fff" stroke-width="0.7" opacity="0.85"/></svg>
<svg class="ab" style="left:1040.2px;top:11.4px;width:30px;height:15.2px" viewBox="0 0 15 7.6"><polygon points="7.50,3.60 5.70,6.46 2.10,6.46 0.30,3.60 2.10,0.74 5.70,0.74" fill="none" stroke="#fff" stroke-width="0.7" opacity="0.9"/><circle cx="3.9" cy="3.6" r="1.3" fill="none" stroke="#fff" stroke-width="0.6" opacity="0.85"/><path d="M9 4.2L10.4 2.6L11.2 3.4L13 0.8" fill="none" stroke="#fff" stroke-width="0.45" opacity="0.6"/><path d="M8.4 6.6H10.4V5.6H11.6V6.6" fill="none" stroke="#fff" stroke-width="0.6" opacity="0.75"/><path d="M12.4 1H13.2" stroke="#fff" stroke-width="0.4" opacity="0.6"/></svg><div class="ab t" style="left:1034.6px;top:29.4px;width:40px;font-size:7.6px;font-weight:bold;color:#fff;letter-spacing:-1.24px">ANKARA</div>
<svg class="ab" style="left:1097.6px;top:11.4px;width:30px;height:15.2px" viewBox="0 0 15 7.6"><polygon points="7.50,3.60 5.70,6.46 2.10,6.46 0.30,3.60 2.10,0.74 5.70,0.74" fill="none" stroke="#fff" stroke-width="0.7" opacity="0.9"/><circle cx="3.9" cy="3.6" r="1.3" fill="none" stroke="#fff" stroke-width="0.6" opacity="0.85"/><path d="M9 4.2L10.4 2.6L11.2 3.4L13 0.8" fill="none" stroke="#fff" stroke-width="0.45" opacity="0.6"/><path d="M8.4 6.6H10.4V5.6H11.6V6.6" fill="none" stroke="#fff" stroke-width="0.6" opacity="0.75"/><path d="M12.4 1H13.2" stroke="#fff" stroke-width="0.4" opacity="0.6"/></svg><div class="ab t" style="left:1092.2px;top:29.4px;width:40px;font-size:7.6px;font-weight:bold;color:#fff;letter-spacing:-1.24px">İZMİR</div>
<svg class="ab" style="left:1159.2px;top:12px;width:15.2px;height:22.8px" viewBox="0 0 7.6 11.4"><rect x="2.2" y="0.55" width="3.2" height="6.2" rx="1.6" fill="none" stroke="#fff" stroke-width="1"/><path d="M0.8 4.4V5.4C0.8 7.2 2.1 8.5 3.8 8.5C5.5 8.5 6.8 7.2 6.8 5.4V4.4" fill="none" stroke="#fff" stroke-width="0.95"/><path d="M3.8 8.5V10.9" stroke="#fff" stroke-width="1.1"/></svg>
<svg class="ab" style="left:1211.2px;top:14.8px;width:24px;height:17.2px" viewBox="0 0 12 8.6"><path d="M0.4 4.3C2 1.6 4 0.6 6 0.6C8 0.6 10 1.6 11.6 4.3C10 7 8 8 6 8C4 8 2 7 0.4 4.3Z" fill="#fff"/><circle cx="6" cy="4.3" r="2" fill="#a6bfcf"/><path d="M3.9 7.9L8.3 0.5" stroke="#a6bfcf" stroke-width="1.1"/><path d="M4.6 8.1L8.9 0.7" stroke="#fff" stroke-width="0.7"/></svg>
</div></body></html>
